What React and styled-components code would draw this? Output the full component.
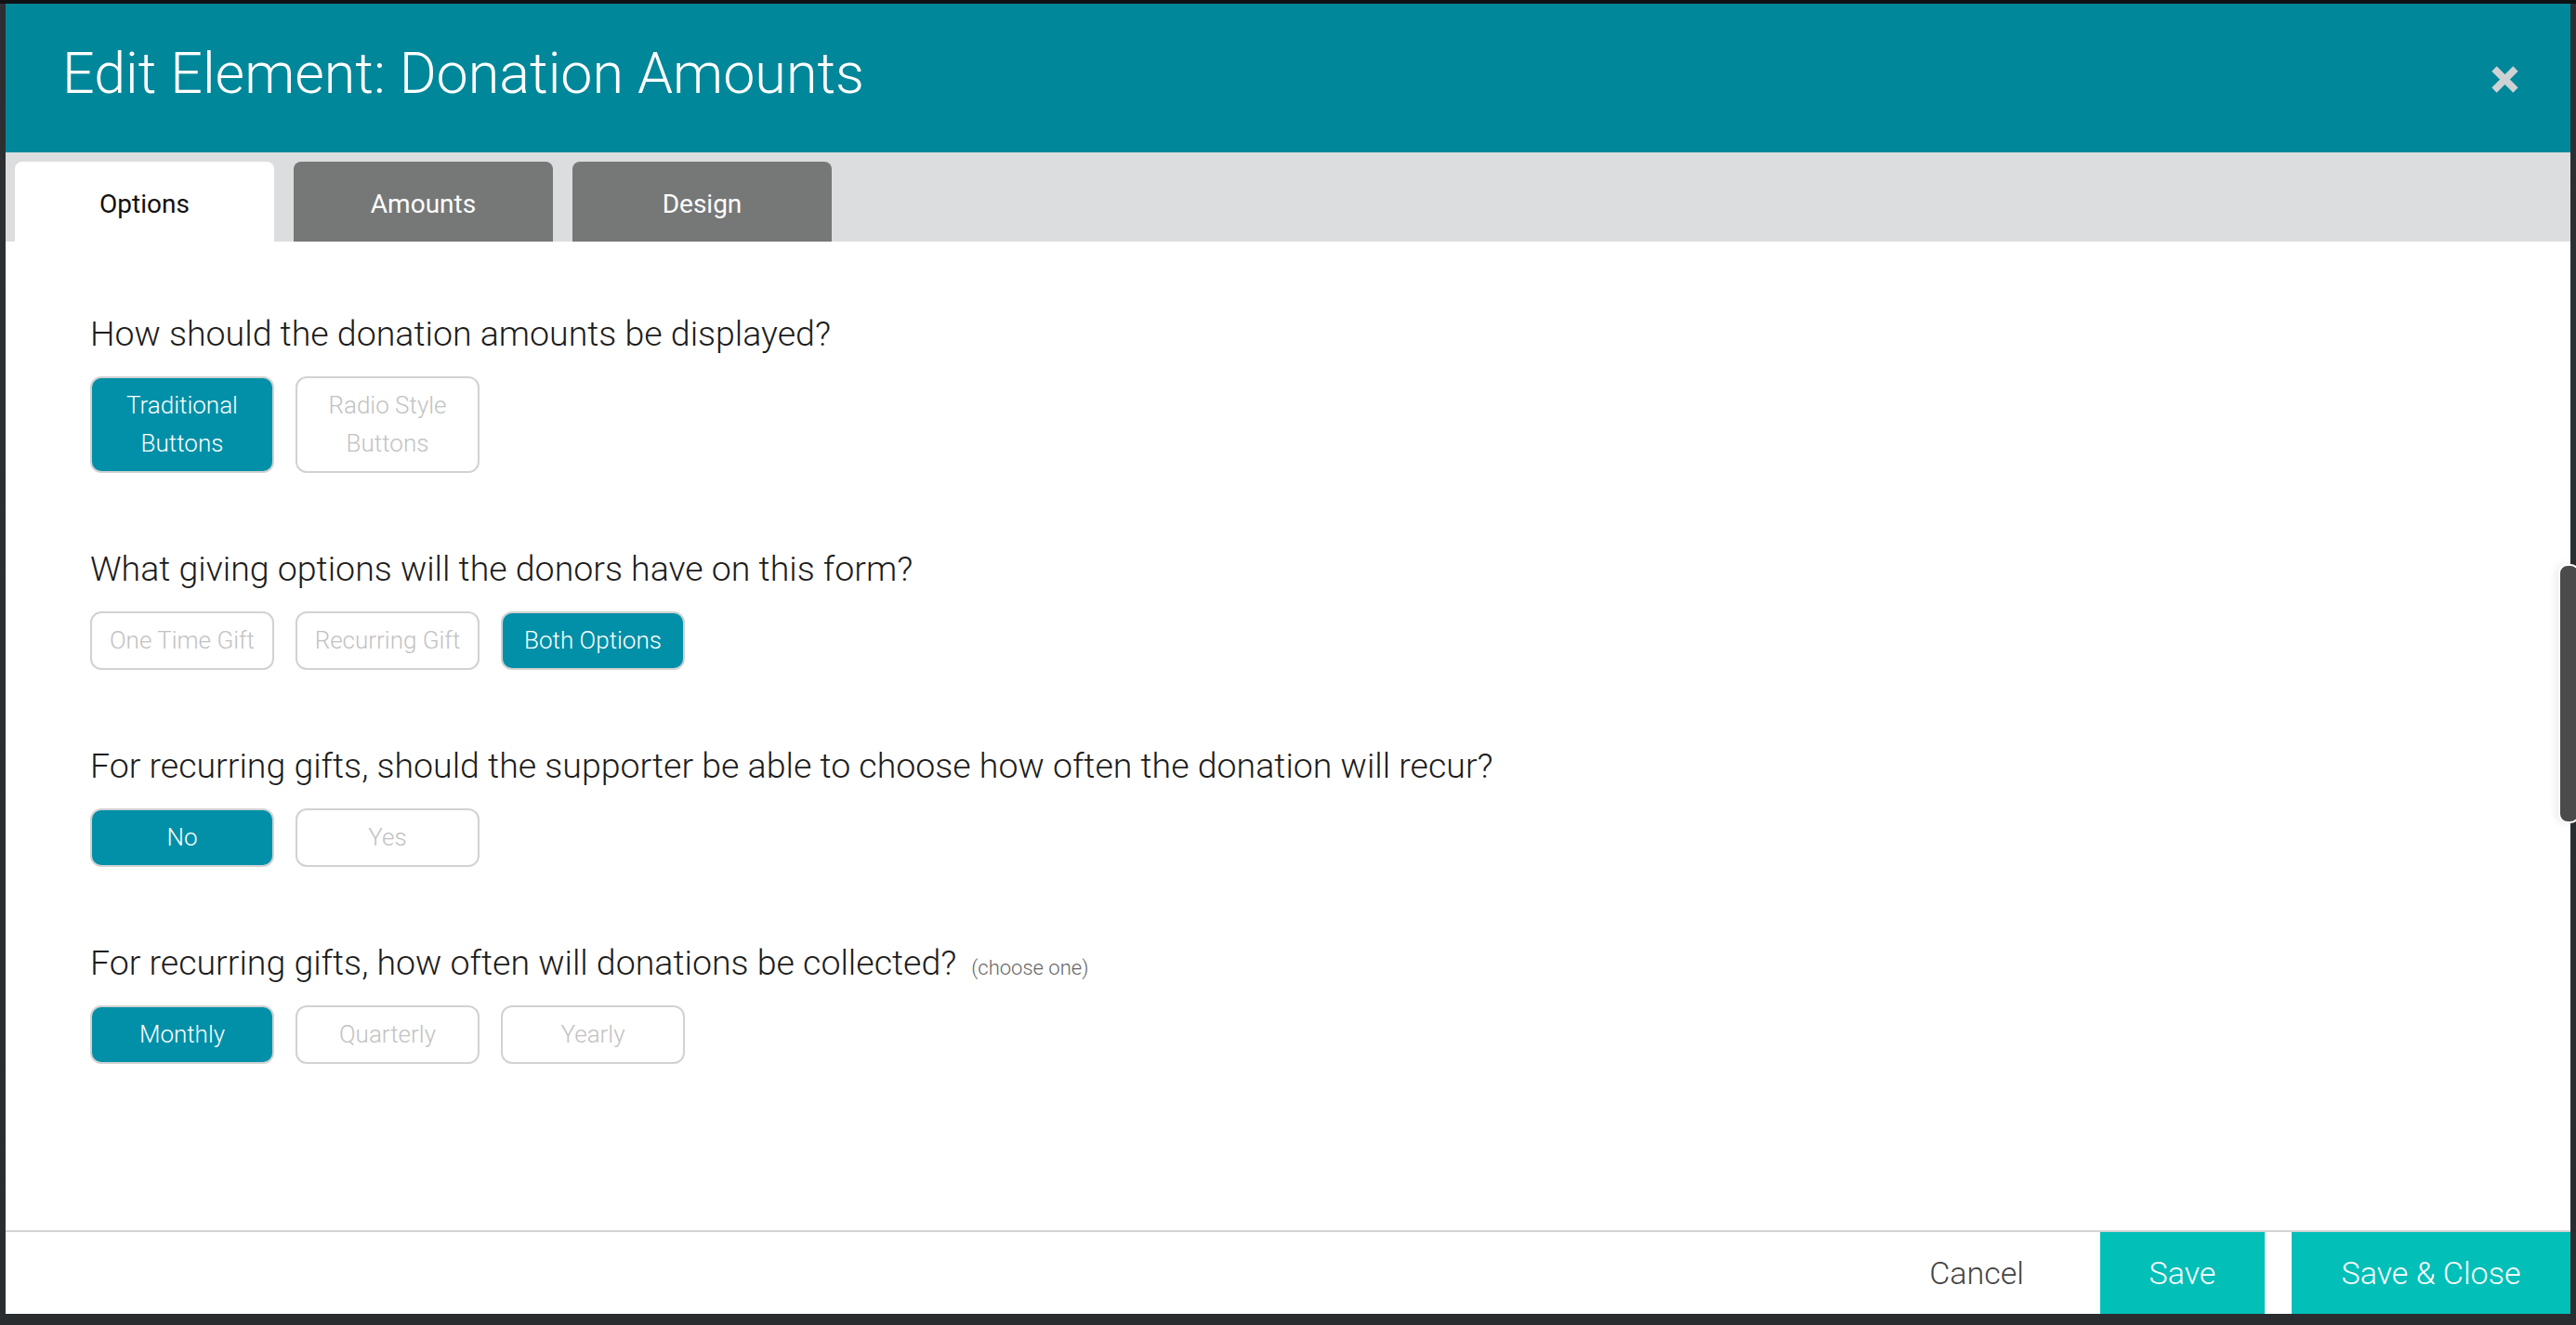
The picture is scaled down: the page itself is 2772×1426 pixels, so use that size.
import React, { useState } from 'react';
import styled, { createGlobalStyle } from 'styled-components';

const GlobalStyle = createGlobalStyle`
  html, body {
    margin: 0;
    padding: 0;
    background: #222427;
  }
  * {
    box-sizing: border-box;
  }
  body {
    font-family: Roboto, 'Noto Sans', Arial, sans-serif;
  }
`;

const Page = styled.div`
  position: relative;
  height: 1426px;
  padding: 4px 6px 12px 6px;
  background: linear-gradient(180deg, #111213 0px, #111213 4px, #2c3033 4px, #2a2d30 100%);
`;

const Modal = styled.div`
  display: flex;
  flex-direction: column;
  height: 100%;
  background: #ffffff;
`;

const Header = styled.div`
  display: flex;
  align-items: flex-start;
  justify-content: space-between;
  height: 160px;
  padding: 45px 55px 0 61px;
  background: #00879a;
`;

const Title = styled.h1`
  margin: 0;
  font-size: 61px;
  line-height: 60px;
  font-weight: 300;
  color: #ffffff;
`;

const CloseButton = styled.button`
  display: flex;
  margin-top: 21px;
  padding: 0;
  border: none;
  background: none;
  cursor: pointer;
`;

const TabBar = styled.div`
  display: flex;
  gap: 21px;
  height: 96px;
  padding: 10px 0 0 10px;
  background: #dcddde;
`;

const Tab = styled.button`
  width: 279px;
  height: 86px;
  padding: 6px 0 0;
  border: none;
  border-radius: 8px 8px 0 0;
  font-family: Roboto, Arial, sans-serif;
  font-size: 28px;
  line-height: 80px;
  font-weight: 400;
  background: ${(p) => (p.active ? '#ffffff' : '#767878')};
  color: ${(p) => (p.active ? '#111111' : '#ffffff')};
  cursor: pointer;
`;

const Content = styled.div`
  flex: 1;
  display: flex;
  flex-direction: column;
  gap: 81px;
  padding: 77px 0 0 91px;
`;

const Section = styled.div`
  display: flex;
  flex-direction: column;
  gap: 24px;
`;

const Question = styled.div`
  height: 44px;
  font-size: 37.5px;
  line-height: 44px;
  font-weight: 300;
  color: #1c1c1c;
  white-space: nowrap;
`;

const Hint = styled.span`
  margin-left: 16px;
  font-size: 22px;
  line-height: 1;
  font-weight: 300;
  color: #666666;
`;

const ChoiceRow = styled.div`
  display: flex;
  gap: 23px;
`;

const Choice = styled.button`
  width: 198px;
  padding: 9px 6px;
  border: 2px solid #d2d2d2;
  border-radius: 12px;
  font-family: Roboto, Arial, sans-serif;
  font-size: 26px;
  line-height: 41px;
  font-weight: 300;
  background: ${(p) => (p.active ? '#0190a8' : '#ffffff')};
  color: ${(p) => (p.active ? '#ffffff' : '#c2c2c2')};
  cursor: pointer;
`;

const Footer = styled.div`
  display: flex;
  justify-content: flex-end;
  align-items: stretch;
  height: 90px;
  border-top: 2px solid #d3d3d3;
`;

const CancelButton = styled.button`
  margin-right: 42px;
  padding: 0 40px;
  border: none;
  background: none;
  font-family: Roboto, Arial, sans-serif;
  font-size: 34px;
  line-height: 86px;
  font-weight: 300;
  color: #444444;
  cursor: pointer;
`;

const SaveButton = styled.button`
  width: ${(p) => p.width}px;
  margin-left: ${(p) => p.gapLeft || 0}px;
  padding: 0;
  border: none;
  background: #02bfb8;
  font-family: Roboto, Arial, sans-serif;
  font-size: 34px;
  line-height: 86px;
  font-weight: 300;
  color: #ffffff;
  cursor: pointer;
`;

const ScrollThumb = styled.div`
  position: absolute;
  top: 607px;
  right: -4px;
  width: 23px;
  height: 279px;
  border: 2px solid #ffffff;
  border-radius: 10px;
  background: #4b4b4b;
  box-shadow: -3px 0 8px rgba(0, 0, 0, 0.08);
`;

const CloseIcon = () => (
  <svg width="31" height="31" viewBox="0 0 31 31">
    <path d="M4 4 L27 27 M27 4 L4 27" stroke="#cfd2d3" strokeWidth="7.5" strokeLinecap="butt" />
  </svg>
);

const questions = [
  {
    id: 'display',
    text: 'How should the donation amounts be displayed?',
    options: [['Traditional', 'Buttons'], ['Radio Style', 'Buttons']],
    selected: 0,
  },
  {
    id: 'giving',
    text: 'What giving options will the donors have on this form?',
    options: [['One Time Gift'], ['Recurring Gift'], ['Both Options']],
    selected: 2,
  },
  {
    id: 'choose',
    text: 'For recurring gifts, should the supporter be able to choose how often the donation will recur?',
    options: [['No'], ['Yes']],
    selected: 0,
  },
  {
    id: 'frequency',
    text: 'For recurring gifts, how often will donations be collected?',
    hint: '(choose one)',
    options: [['Monthly'], ['Quarterly'], ['Yearly']],
    selected: 0,
  },
];

const App = () => {
  const [tab, setTab] = useState('Options');
  const [answers, setAnswers] = useState(
    questions.reduce((acc, q) => ({ ...acc, [q.id]: q.selected }), {})
  );

  return (
    <Page>
      <GlobalStyle />
      <Modal>
        <Header>
          <Title>Edit Element: Donation Amounts</Title>
          <CloseButton aria-label="Close">
            <CloseIcon />
          </CloseButton>
        </Header>
        <TabBar>
          {['Options', 'Amounts', 'Design'].map((name) => (
            <Tab key={name} active={tab === name} onClick={() => setTab(name)}>
              {name}
            </Tab>
          ))}
        </TabBar>
        <Content>
          {questions.map((q) => (
            <Section key={q.id}>
              <Question>
                {q.text}
                {q.hint && <Hint>{q.hint}</Hint>}
              </Question>
              <ChoiceRow>
                {q.options.map((lines, i) => (
                  <Choice
                    key={lines.join(' ')}
                    active={answers[q.id] === i}
                    onClick={() => setAnswers({ ...answers, [q.id]: i })}
                  >
                    {lines.map((line, j) => (
                      <React.Fragment key={line}>
                        {j > 0 && <br />}
                        {line}
                      </React.Fragment>
                    ))}
                  </Choice>
                ))}
              </ChoiceRow>
            </Section>
          ))}
        </Content>
        <Footer>
          <CancelButton>Cancel</CancelButton>
          <SaveButton width={177}>Save</SaveButton>
          <SaveButton width={300} gapLeft={29}>Save &amp; Close</SaveButton>
        </Footer>
      </Modal>
      <ScrollThumb />
    </Page>
  );
};

export default App;
